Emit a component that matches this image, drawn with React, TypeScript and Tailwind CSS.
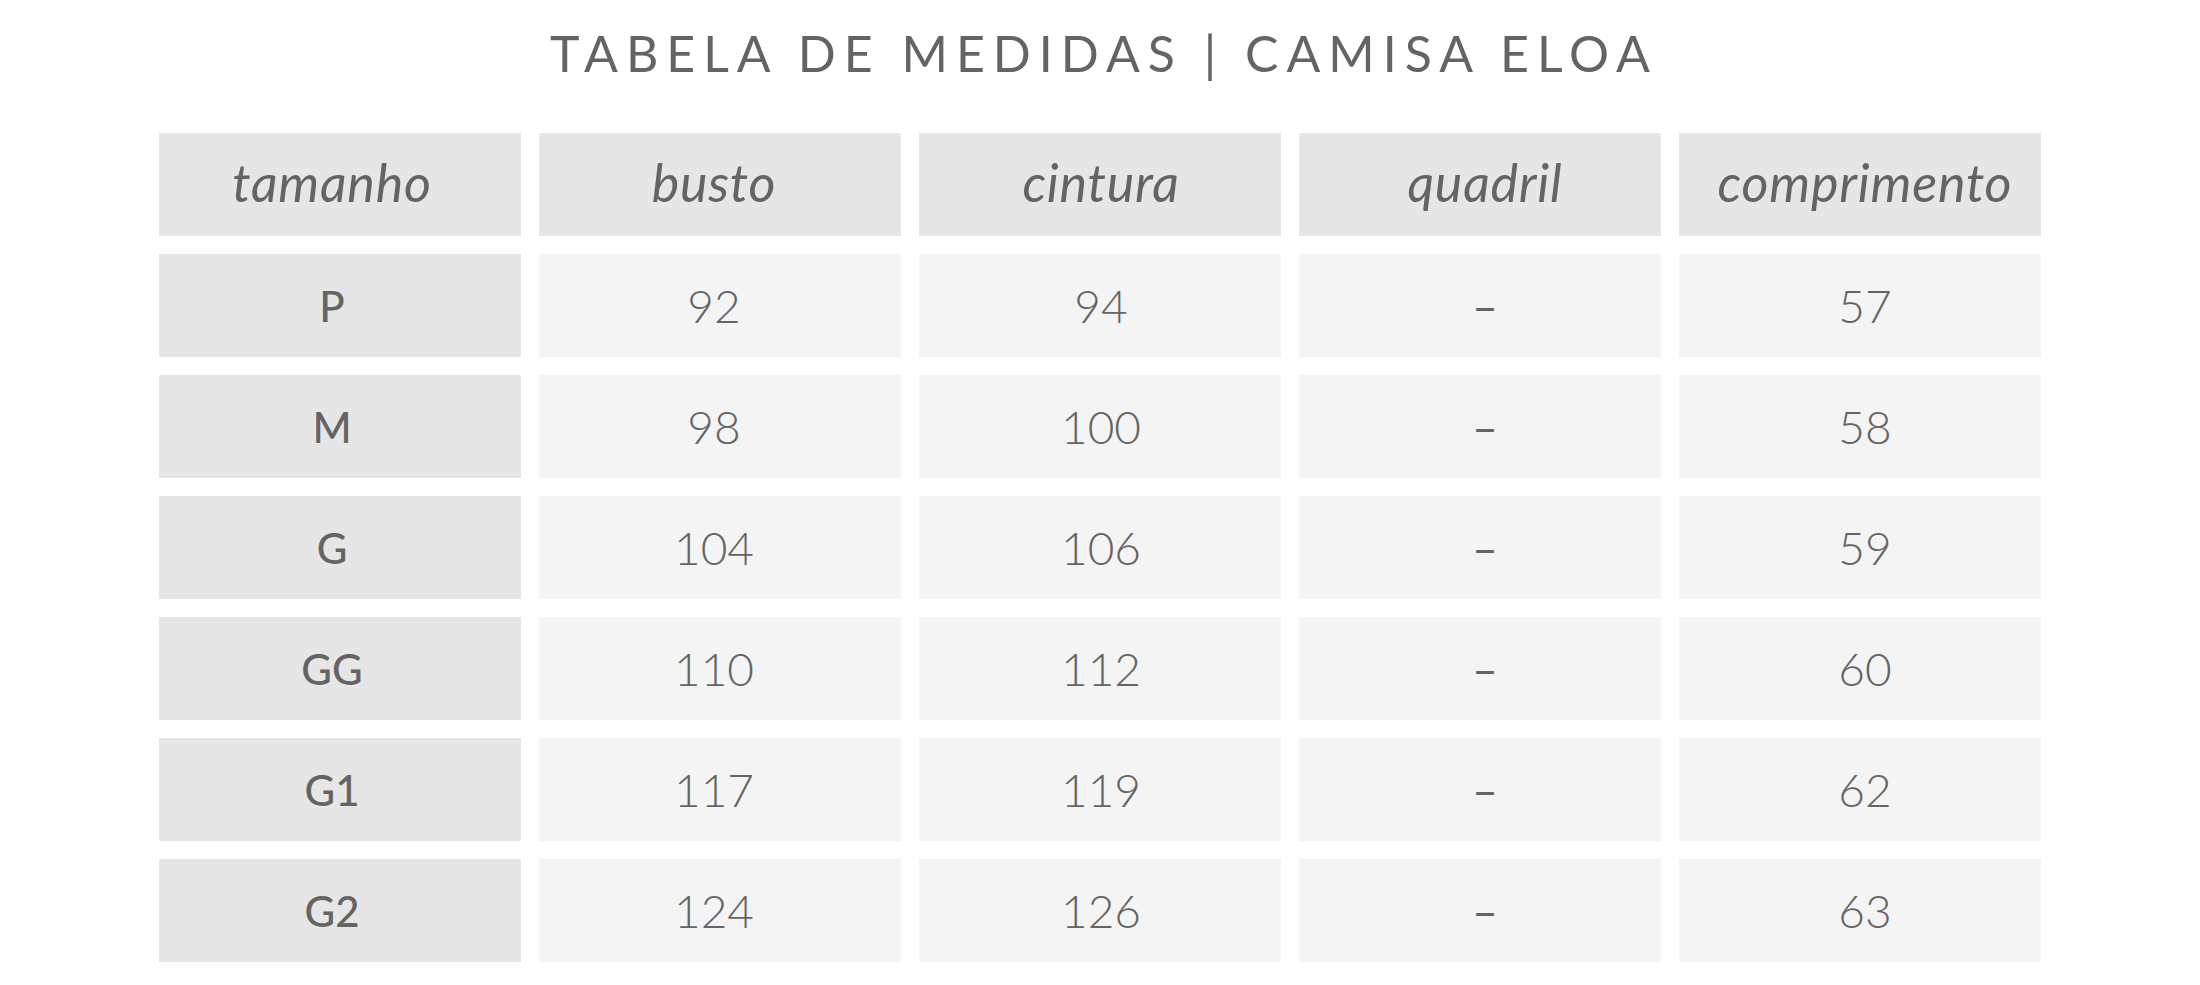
import React from 'react';

const headers = ['tamanho', 'busto', 'cintura', 'quadril', 'comprimento'];

const rows: string[][] = [
  ['P', '92', '94', '–', '57'],
  ['M', '98', '100', '–', '58'],
  ['G', '104', '106', '–', '59'],
  ['GG', '110', '112', '–', '60'],
  ['G1', '117', '119', '–', '62'],
  ['G2', '124', '126', '–', '63'],
];

// text in the source image sits a little off-centre per column
const nudge = ['pr-[16px]', 'pr-[12px]', 'pl-[2px]', 'pl-[10px]', 'pl-[10px]'];

const App: React.FC = () => {
  return (
    <div className="w-full min-h-[985px] bg-white flex flex-col items-center pt-[28px] font-['Lato','Liberation_Sans',sans-serif] text-[#646464]">
      {/* Title */}
      <h1 className="text-[50px] leading-none font-normal tracking-[0.16em] whitespace-nowrap pl-[0.16em]">
        TABELA DE MEDIDAS | CAMISA ELOA
      </h1>

      {/* Table */}
      <div className="mt-[55px] grid grid-cols-[repeat(5,362px)] auto-rows-[103px] gap-[18px]">
        {headers.map((h, i) => (
          <div key={h} className={`bg-[#e6e6e6] flex items-center justify-center pb-[6px] ${nudge[i]}`}>
            <span className="text-[52px] leading-none italic font-normal tracking-[0.015em]">{h}</span>
          </div>
        ))}

        {rows.map((row) =>
          row.map((cell, i) => (
            <div
              key={row[0] + i}
              className={`${i === 0 ? 'bg-[#e6e6e6]' : 'bg-[#f4f4f4]'} flex items-center justify-center ${nudge[i]}`}
            >
              {i === 0 ? (
                <span className="text-[42px] leading-none font-medium">{cell}</span>
              ) : cell === '–' ? (
                <span className="text-[44px] leading-none font-normal">{cell}</span>
              ) : (
                <span className="text-[46px] leading-none font-light">{cell}</span>
              )}
            </div>
          ))
        )}
      </div>
    </div>
  );
};

export default App;
